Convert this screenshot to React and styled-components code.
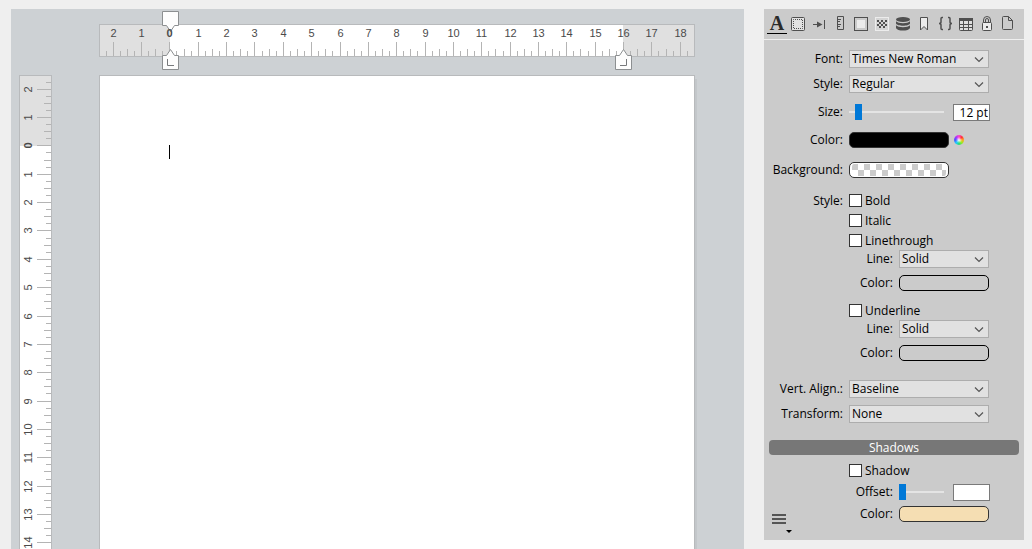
import { useState } from "react";
import styled, { createGlobalStyle } from "styled-components";

const GlobalStyle = createGlobalStyle`
  * {
    box-sizing: border-box;
  }
  body {
    margin: 0;
    background: #efefef;
    font-family: "Open Sans", "Noto Sans", sans-serif;
    font-size: 12px;
    color: #000;
  }
  button, input, select {
    font: inherit;
    color: inherit;
    margin: 0;
    padding: 0;
  }
`;

const Layout = styled.div`
  display: flex;
  align-items: flex-start;
  gap: 20px;
  height: 100vh;
  padding: 9px 8px 0 11px;
  overflow: hidden;
`;

/* ---------- document ---------- */

const Editor = styled.main`
  flex: 1;
  min-width: 0;
  align-self: stretch;
  display: grid;
  grid-template-columns: 33px 596px;
  grid-template-rows: 33px 1fr;
  column-gap: 47px;
  row-gap: 18px;
  padding: 15px 0 0 8px;
  background: #cdd1d4;
  overflow: auto;
  scrollbar-width: none;
`;

const TopRuler = styled.svg`
  grid-column: 2;
  display: block;
  width: 596px;
  height: 33px;
  overflow: visible;
`;

const SideRuler = styled.svg`
  display: block;
  width: 33px;
  height: 842px;
`;

const RulerText = styled.text`
  font-family: "Liberation Sans", Arial, sans-serif;
  font-size: 11px;
  font-weight: ${(p) => (p.$strong ? 700 : 400)};
  fill: #4a4a4a;
  text-anchor: middle;
`;

const Page = styled.div`
  height: 842px;
  padding: 69px;
  background: #fff;
  border: 1px solid #b8babc;
  box-shadow: 2px 4px 0 #c3c7ca;
  font-family: "Liberation Serif", "Times New Roman", serif;
  outline: none;
`;

const Caret = styled.span`
  display: block;
  width: 1px;
  height: 14px;
  background: #000;
`;

const CM = 28.35;
const ORIGIN = 70.4;

const ticks = (from, to) => {
  const list = [];
  for (let q = from; q <= to; q++) {
    const size = q % 4 === 0 ? 14 : q % 2 === 0 ? 7 : 5;
    list.push({ q, size, pos: Math.round(ORIGIN + (q * CM) / 4) + 0.5 });
  }
  return list;
};

const HorizontalRuler = () => (
  <TopRuler>
    <rect x="0.5" y="0.5" width="595" height="32" fill="#e0e0e0" />
    <rect x="71" y="1" width="453" height="31" fill="#fff" />
    {ticks(-9, 73).map(({ q, size, pos }) => (
      <line key={q} x1={pos} x2={pos} y1={32 - size} y2="32" stroke="#b4b4b4" />
    ))}
    <rect x="0.5" y="0.5" width="595" height="32" fill="none" stroke="#b8babc" />
    <g fill="#fdfdfd" stroke="#8c8f91">
      <path d="M63.5 -12.5H79.5V1.5H75.5L71.5 7.5L67.5 1.5H63.5Z" />
      <path d="M63.5 45.5V31.5H67.5L71.5 25.5L75.5 31.5H79.5V45.5Z" />
      <path d="M516.5 45.5V31.5H520.5L524.5 25.5L528.5 31.5H532.5V45.5Z" />
      <path d="M68.5 35V41.5H75M527.5 35V41.5H521" fill="none" stroke="#77797b" />
    </g>
    {ticks(-9, 73)
      .filter(({ q }) => q % 4 === 0)
      .map(({ q, pos }) => (
        <RulerText key={q} x={pos} y="13" $strong={q === 0}>
          {Math.abs(q / 4)}
        </RulerText>
      ))}
  </TopRuler>
);

const VerticalRuler = () => (
  <SideRuler>
    <rect x="0.5" y="0.5" width="32" height="841" fill="#fff" />
    <rect x="1" y="1" width="31" height="70" fill="#e0e0e0" />
    {ticks(-9, 80).map(({ q, size, pos }) => (
      <line key={q} x1={32 - size} x2="32" y1={pos} y2={pos} stroke="#b4b4b4" />
    ))}
    <rect x="0.5" y="0.5" width="32" height="841" fill="none" stroke="#b8babc" />
    {ticks(-9, 80)
      .filter(({ q }) => q % 4 === 0)
      .map(({ q, pos }) => (
        <RulerText
          key={q}
          transform={`translate(13 ${pos}) rotate(-90)`}
          $strong={q === 0}
        >
          {Math.abs(q / 4)}
        </RulerText>
      ))}
  </SideRuler>
);

/* ---------- format panel ---------- */

const Panel = styled.aside`
  flex: 0 0 260px;
  background: #cbcbcb;
`;

const Toolbar = styled.nav`
  display: flex;
  gap: 5px;
  height: 31px;
  padding: 7px 5px 0;
  border-bottom: 1px solid #efefef;
`;

const ToolButton = styled.button`
  position: relative;
  width: 16px;
  height: 16px;
  border: 0;
  background: none;

  svg {
    display: block;
  }

  &::after {
    content: "";
    display: ${(p) => (p.$active ? "block" : "none")};
    position: absolute;
    left: -2px;
    right: -2px;
    top: 17px;
    height: 1px;
    background: #000;
  }
`;

const LetterIcon = styled.span`
  display: block;
  height: 16px;
  font: bold 20px/14px "Liberation Serif", serif;
  color: #2b2b2b;
`;

const Form = styled.form`
  padding-top: 10px;
`;

const Row = styled.div`
  display: flex;
  align-items: center;
  gap: 6px;
  height: ${(p) => (p.$tall ? 19 : 18)}px;
  margin-top: ${(p) => p.$space || 0}px;
`;

const Label = styled.label`
  width: ${(p) => (p.$nested ? 129 : 79)}px;
  line-height: 18px;
  text-align: right;
  white-space: nowrap;
`;

const SelectBox = styled.div`
  position: relative;
  width: ${(p) => (p.$narrow ? 90 : 140)}px;

  svg {
    position: absolute;
    right: 5px;
    top: 7px;
    pointer-events: none;
  }
`;

const Select = styled.select`
  display: block;
  appearance: none;
  width: 100%;
  height: 18px;
  padding: 0 18px 0 2px;
  line-height: 16px;
  border: 1px solid #adadad;
  border-radius: 0;
  background: #e1e1e1;
`;

const Slider = styled.input`
  appearance: none;
  width: ${(p) => (p.$narrow ? 45 : 95)}px;
  height: 16px;
  background: linear-gradient(#e4e4e4, #e4e4e4) center / 100% 2px no-repeat;

  &::-webkit-slider-thumb {
    appearance: none;
    width: 7px;
    height: 16px;
    background: #0078d7;
  }
`;

const NumberBox = styled.input`
  width: 37px;
  height: 17px;
  margin-left: 3px;
  padding-right: 1px;
  text-align: right;
  border: 1px solid #7a7a7a;
  background: #fff;
`;

const Swatch = styled.button`
  width: ${(p) => (p.$narrow ? 90 : 100)}px;
  height: 16px;
  padding: 1px 2px;
  border: 1px solid ${(p) => p.$edge || "#333"};
  border-radius: 5px;
  background: ${(p) => p.$fill || "transparent"};
`;

const ClearSwatch = styled(Swatch)`
  background:
    conic-gradient(#fff 25%, #cbcbcb 0 50%, #fff 0 75%, #cbcbcb 0) 0 0 / 12px
      12px content-box content-box,
    #fff;
`;

const ColorWheel = styled.button`
  width: 10px;
  height: 10px;
  margin-left: -1px;
  border: 0;
  border-radius: 50%;
  background:
    radial-gradient(#fff, transparent 45%),
    conic-gradient(#f4c, #f33, #fa2, #9e2, #2d7, #2cf, #45f, #a3f, #f4c);
`;

const Check = styled.label`
  display: flex;
  align-items: center;
  gap: 3px;
  line-height: 19px;
`;

const CheckBox = styled.input`
  appearance: none;
  width: 13px;
  height: 13px;
  border: 1px solid #333;
  background: #fff;

  &:checked {
    background: #333;
    box-shadow: inset 0 0 0 2px #fff;
  }
`;

const SectionTitle = styled.h2`
  margin: 17px 5px 0;
  font-size: 12px;
  font-weight: 400;
  line-height: 15px;
  text-align: center;
  color: #fff;
  background: #777;
  border-radius: 4px;
`;

const Footer = styled.footer`
  display: flex;
  height: 30px;
  margin-top: -13px;
  padding: 2px 0 0 8px;
`;

const MenuButton = styled.button`
  width: 22px;
  height: 22px;
  border: 0;
  background: none;

  svg {
    display: block;
  }
`;

const ink = "#4f4f4f";

const icons = {
  Borders: (
    <>
      <rect x="1.5" y="1.5" width="13" height="13" rx="1" fill="#e2e2e2" stroke={ink} />
      <rect x="3.5" y="3.5" width="9" height="9" fill="none" stroke={ink} strokeDasharray="1 1" strokeDashoffset="0.5" />
    </>
  ),
  Tabs: (
    <>
      <path d="M2 8.5H9M13.5 4V13" fill="none" stroke={ink} />
      <path d="M6 5.5L11.5 8.5L6 11.5Z" fill={ink} />
    </>
  ),
  Spacing: (
    <path d="M5.5 0.5H11.5V13.5H5.5ZM6 3.5H9M6 5.5H8M6 8.5H9M6 10.5H8" fill="none" stroke={ink} />
  ),
  Frame: (
    <>
      <rect x="1.5" y="1.5" width="13" height="13" fill="#cbcbcb" stroke={ink} />
      <rect x="4" y="4" width="8" height="8" fill="#ececec" />
    </>
  ),
  Background: (
    <>
      <rect x="1.5" y="1.5" width="13" height="13" fill="#d4d4d4" stroke="#ececec" />
      <path
        d="M3 4h2v2h-2zM7 4h2v2h-2zM11 4h2v2h-2zM5 6h2v2h-2zM9 6h2v2h-2zM3 8h2v2h-2zM7 8h2v2h-2zM11 8h2v2h-2zM5 10h2v2h-2zM9 10h2v2h-2z"
        fill={ink}
      />
    </>
  ),
  Data: (
    <g fill={ink}>
      <ellipse cx="8" cy="3.5" rx="7" ry="2.6" />
      <path d="M1 5.2C3 7.8 13 7.8 15 5.2V7.4C14 10.4 2 10.4 1 7.4Z" />
      <path d="M1 9.2C3 11.8 13 11.8 15 9.2V12C14 15.4 2 15.4 1 12Z" />
    </g>
  ),
  Bookmark: <path d="M4.5 1.5H11.5V14L8 10.5L4.5 14Z" fill="#ececec" stroke={ink} />,
  Code: (
    <path
      d="M6 1.5H5Q4 1.5 4 2.5V6Q4 7.5 2 7.5Q4 7.5 4 9V12.5Q4 13.5 5 13.5H6M11 1.5H12Q13 1.5 13 2.5V6Q13 7.5 15 7.5Q13 7.5 13 9V12.5Q13 13.5 12 13.5H11"
      fill="none"
      stroke={ink}
      strokeWidth="1.5"
    />
  ),
  Table: (
    <>
      <rect x="1.5" y="2.5" width="13" height="12" rx="1" fill="#dedede" stroke={ink} />
      <path d="M1 2H15V5H1Z" fill={ink} />
      <path d="M1.5 8.5H14.5M1.5 11.5H14.5M5.5 5V14.5M10.5 5V14.5" stroke={ink} />
    </>
  ),
  Protection: (
    <>
      <path d="M4.5 7V4A3.5 3.5 0 0 1 11.5 4V7M6.5 7V4A1.5 1.5 0 0 1 9.5 4V7" fill="none" stroke={ink} />
      <rect x="3.5" y="6.5" width="9" height="8" rx="1" fill="#ececec" stroke={ink} />
      <rect x="7" y="10" width="2" height="2" fill={ink} />
    </>
  ),
  Document: (
    <path d="M2.5 1.5Q2.5 0.5 3.5 0.5H8.5L12.5 4.5V12.5Q12.5 13.5 11.5 13.5H3.5Q2.5 13.5 2.5 12.5ZM8.5 0.5V4.5H12.5" fill="none" stroke={ink} />
  ),
};

const Dropdown = ({ id, options, narrow }) => (
  <SelectBox $narrow={narrow}>
    <Select id={id}>
      {options.map((o) => (
        <option key={o}>{o}</option>
      ))}
    </Select>
    <svg width="10" height="6" viewBox="0 0 10 6">
      <path d="M1 0.5L5 4.5L9 0.5" fill="none" stroke="#555" strokeWidth="1.2" />
    </svg>
  </SelectBox>
);

const LineSettings = ({ name }) => (
  <>
    <Row>
      <Label $nested htmlFor={`${name}-line`}>Line:</Label>
      <Dropdown id={`${name}-line`} narrow options={["Solid", "Dotted", "Dashed"]} />
    </Row>
    <Row $space={6}>
      <Label $nested htmlFor={`${name}-color`}>Color:</Label>
      <Swatch id={`${name}-color`} type="button" $narrow $edge="#000" />
    </Row>
  </>
);

const CheckRow = ({ title, label, space }) => (
  <Row $tall $space={space}>
    <Label as="span">{label}</Label>
    <Check>
      <CheckBox type="checkbox" />
      {title}
    </Check>
  </Row>
);

const FormatPanel = () => {
  const [size, setSize] = useState(12);
  const [offset, setOffset] = useState(0);

  return (
    <Panel>
      <Toolbar>
        <ToolButton $active aria-label="Text">
          <LetterIcon>A</LetterIcon>
        </ToolButton>
        {Object.entries(icons).map(([name, icon]) => (
          <ToolButton key={name} aria-label={name}>
            <svg width="16" height="16" viewBox="0 0 16 16">{icon}</svg>
          </ToolButton>
        ))}
      </Toolbar>
      <Form>
        <Row>
          <Label htmlFor="font">Font:</Label>
          <Dropdown id="font" options={["Times New Roman", "Arial"]} />
        </Row>
        <Row $space={7}>
          <Label htmlFor="style">Style:</Label>
          <Dropdown id="style" options={["Regular", "Bold", "Italic"]} />
        </Row>
        <Row $space={10}>
          <Label htmlFor="size">Size:</Label>
          <Slider
            id="size"
            type="range"
            min="4"
            max="120"
            value={size}
            onChange={(e) => setSize(e.target.value)}
          />
          <NumberBox aria-label="Size in points" value={`${size} pt`} readOnly />
        </Row>
        <Row $space={10}>
          <Label htmlFor="color">Color:</Label>
          <Swatch id="color" type="button" $fill="#000" />
          <ColorWheel type="button" aria-label="Pick a color" />
        </Row>
        <Row $space={12}>
          <Label htmlFor="background">Background:</Label>
          <ClearSwatch id="background" type="button" />
        </Row>

        <CheckRow label="Style:" title="Bold" space={12} />
        <CheckRow title="Italic" space={1} />
        <CheckRow title="Linethrough" space={1} />
        <LineSettings name="linethrough" />
        <CheckRow title="Underline" space={9} />
        <LineSettings name="underline" />

        <Row $space={18}>
          <Label htmlFor="align">Vert. Align.:</Label>
          <Dropdown id="align" options={["Baseline", "Superscript", "Subscript"]} />
        </Row>
        <Row $space={7}>
          <Label htmlFor="transform">Transform:</Label>
          <Dropdown id="transform" options={["None", "Uppercase", "Lowercase"]} />
        </Row>

        <SectionTitle>Shadows</SectionTitle>
        <CheckRow title="Shadow" space={6} />
        <Row $space={3}>
          <Label $nested htmlFor="offset">Offset:</Label>
          <Slider
            id="offset"
            type="range"
            $narrow
            max="20"
            value={offset}
            onChange={(e) => setOffset(e.target.value)}
          />
          <NumberBox aria-label="Offset in points" value={offset ? `${offset} pt` : ""} readOnly />
        </Row>
        <Row $space={4}>
          <Label $nested htmlFor="shadow-color">Color:</Label>
          <Swatch id="shadow-color" type="button" $narrow $fill="#f5deb3" />
        </Row>
      </Form>
      <Footer>
        <MenuButton aria-label="Menu">
          <svg width="22" height="22" viewBox="0 0 22 22">
            <path d="M0 3H14M0 7H14M0 11H14" stroke="#555" strokeWidth="2" />
            <path d="M14 18H20L17 21Z" fill="#000" />
          </svg>
        </MenuButton>
      </Footer>
    </Panel>
  );
};

const App = () => (
  <Layout>
    <GlobalStyle />
    <Editor>
      <HorizontalRuler />
      <VerticalRuler />
      <Page role="textbox" aria-label="Document" tabIndex={0}>
        <Caret />
      </Page>
    </Editor>
    <FormatPanel />
  </Layout>
);

export default App;
